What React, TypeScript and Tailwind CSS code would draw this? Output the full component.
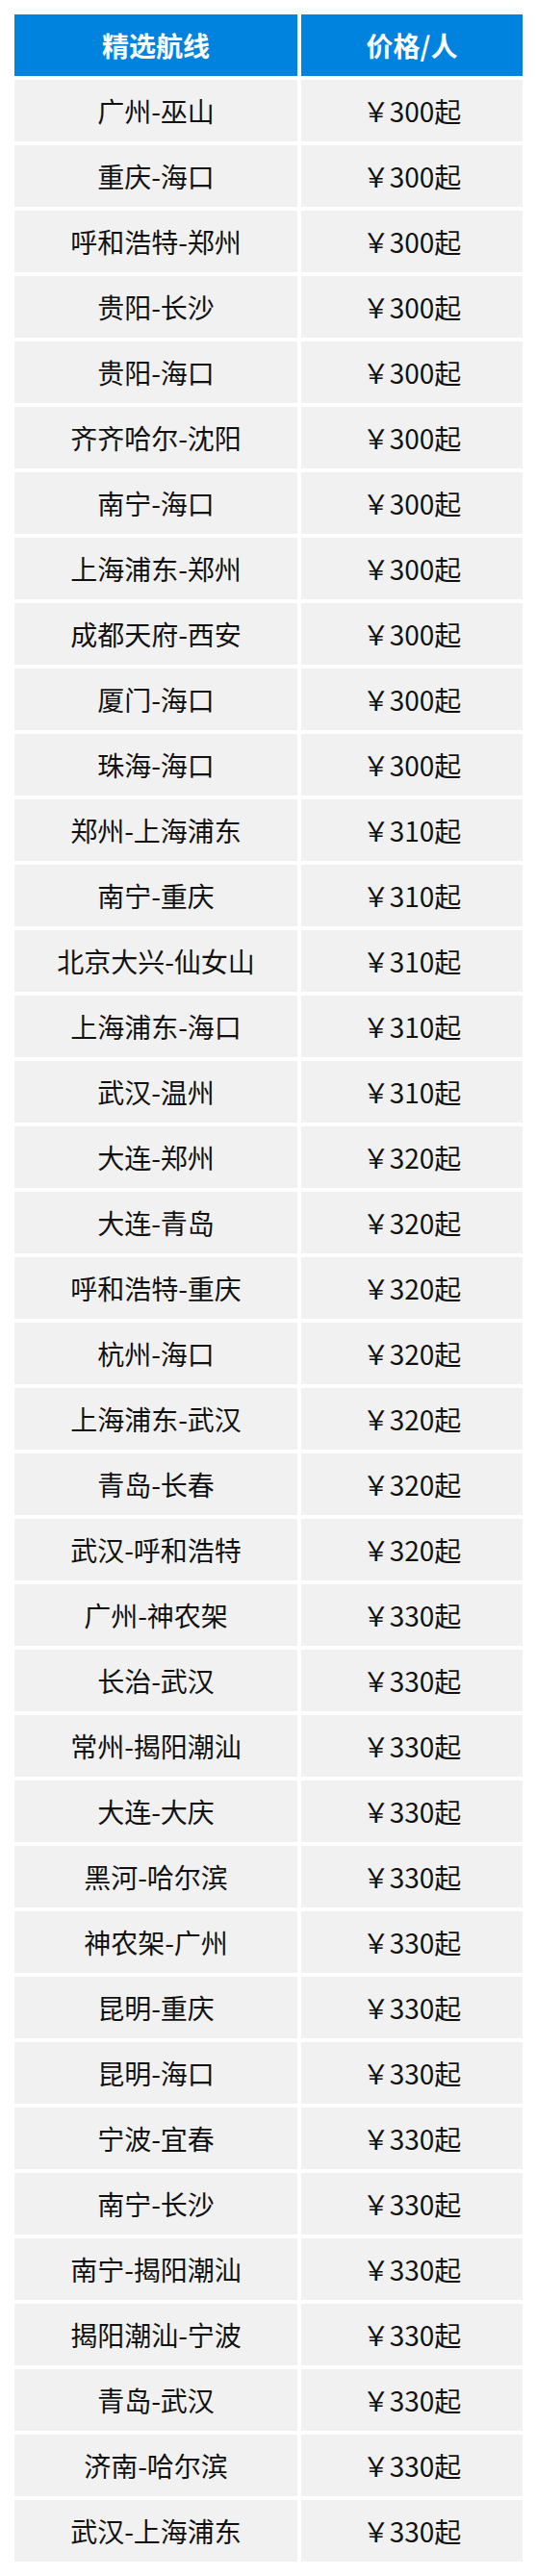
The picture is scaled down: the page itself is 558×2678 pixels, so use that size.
import React from 'react';

const routes: [string, string][] = [
  ['广州-巫山', '300'],
  ['重庆-海口', '300'],
  ['呼和浩特-郑州', '300'],
  ['贵阳-长沙', '300'],
  ['贵阳-海口', '300'],
  ['齐齐哈尔-沈阳', '300'],
  ['南宁-海口', '300'],
  ['上海浦东-郑州', '300'],
  ['成都天府-西安', '300'],
  ['厦门-海口', '300'],
  ['珠海-海口', '300'],
  ['郑州-上海浦东', '310'],
  ['南宁-重庆', '310'],
  ['北京大兴-仙女山', '310'],
  ['上海浦东-海口', '310'],
  ['武汉-温州', '310'],
  ['大连-郑州', '320'],
  ['大连-青岛', '320'],
  ['呼和浩特-重庆', '320'],
  ['杭州-海口', '320'],
  ['上海浦东-武汉', '320'],
  ['青岛-长春', '320'],
  ['武汉-呼和浩特', '320'],
  ['广州-神农架', '330'],
  ['长治-武汉', '330'],
  ['常州-揭阳潮汕', '330'],
  ['大连-大庆', '330'],
  ['黑河-哈尔滨', '330'],
  ['神农架-广州', '330'],
  ['昆明-重庆', '330'],
  ['昆明-海口', '330'],
  ['宁波-宜春', '330'],
  ['南宁-长沙', '330'],
  ['南宁-揭阳潮汕', '330'],
  ['揭阳潮汕-宁波', '330'],
  ['青岛-武汉', '330'],
  ['济南-哈尔滨', '330'],
  ['武汉-上海浦东', '330'],
];

const App = () => {
  return (
    <div className="bg-white px-[15px] pt-[15px] pb-[15px] font-['Noto_Sans_CJK_SC',sans-serif]">
      <div className="grid grid-cols-[294px_230px] gap-1 text-[28px]">
        <div className="h-16 flex items-center justify-center bg-[#0083df] text-white font-bold">精选航线</div>
        <div className="h-16 flex items-center justify-center bg-[#0083df] text-white font-bold">价格/人</div>
        {routes.map(([name, price]) => (
          <React.Fragment key={name}>
            <div className="h-16 flex items-center justify-center bg-[#f1f1f1] text-[#111]">{name}</div>
            <div className="h-16 flex items-center justify-center bg-[#f1f1f1] text-[#111]">￥{price}起</div>
          </React.Fragment>
        ))}
      </div>
    </div>
  );
};

export default App;
